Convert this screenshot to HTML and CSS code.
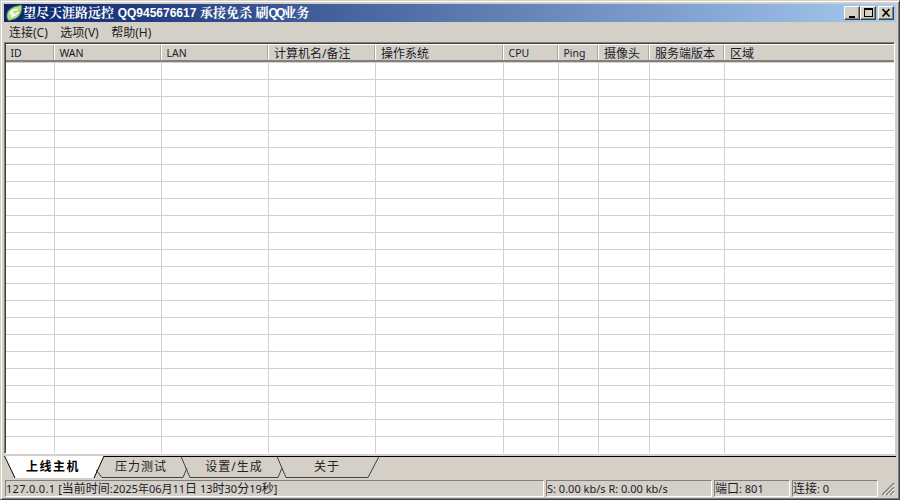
FILE: index.html
```html
<!DOCTYPE html>
<html lang="zh">
<head>
<meta charset="utf-8">
<title>望尽天涯路远控</title>
<link rel="stylesheet" href="styles.css">
</head>
<body>
<div class="window">
  <div class="titlebar">
    <svg class="app-icon" width="17" height="16" viewBox="0 0 17 16">
      <path d="M1 11C1 6 5 2.500 10 1.500C12 1 14 0.500 15.500 0.500C16 5 14.500 10 11 12.500C8 14.500 5 14.500 3 15.500C2 15 1 13 1 11Z" fill="#b4dc86" stroke="#6fa64a"/>
      <path d="M4 9C4.500 6 8 4.500 11.500 4.500M5 11.500C8 11.500 10 9.500 12.500 7M4 9C6 7 8 7.500 7.500 9.500C7 10.500 5.500 10 6 9" fill="none" stroke="#fff" stroke-width="1.300"/>
    </svg>
    <span class="title-text">望尽天涯路远控 <span class="lat">QQ945676617</span> 承接免杀 刷<span class="lat tight">QQ</span>业务</span>
    <div class="caption-buttons">
      <button class="cap-btn"><svg width="12" height="10" viewBox="0 0 12 10"><rect x="3" y="8" width="6" height="2" fill="#000"/></svg></button>
      <button class="cap-btn"><svg width="12" height="10" viewBox="0 0 12 10"><path d="M2 0H11V9H2ZM3 2V8H10V2Z" fill="#000" fill-rule="evenodd"/></svg></button>
      <button class="cap-btn close"><svg width="12" height="10" viewBox="0 0 12 10"><path d="M2.500 1L9.500 8.500M9.500 1L2.500 8.500" stroke="#000" stroke-width="1.700" fill="none"/></svg></button>
    </div>
  </div>
  <div class="menubar">
    <span class="menu-item">连接(C)</span>
    <span class="menu-item">选项(V)</span>
    <span class="menu-item">帮助(H)</span>
  </div>
  <div class="list">
    <div class="list-head">
      <span class="col c1">ID</span>
      <span class="col c2">WAN</span>
      <span class="col c3">LAN</span>
      <span class="col c4 cjk">计算机名/备注</span>
      <span class="col c5 cjk">操作系统</span>
      <span class="col c6">CPU</span>
      <span class="col c7">Ping</span>
      <span class="col c8 cjk">摄像头</span>
      <span class="col c9 cjk">服务端版本</span>
      <span class="col c10 cjk">区域</span>
    </div>
    <div class="list-body"></div>
  </div>
  <div class="tabs">
    <svg class="tab-art" width="892" height="24" viewBox="0 0 892 24">
      <path d="M0 1H100L90 23H11Z" fill="#fff"/>
      <path d="M100 1.500H892" stroke="#000" fill="none"/>
      <path d="M0.500 1L11 23M100 1L90 23" stroke="#000" fill="none"/>
      <path d="M92 15L98 22.500H179L183 13M177 1.500L186 22.500H274L278 13M273 1.500L282 22.500H364L375 1.500" stroke="#404040" fill="none"/>
    </svg>
    <span class="tab active">上线主机</span>
    <span class="tab t2">压力测试</span>
    <span class="tab t3">设置/生成</span>
    <span class="tab t4">关于</span>
  </div>
  <div class="statusbar">
    <span class="panel p1"><span class="ip">127.0.0.1</span> [<span class="zh">当前时间</span>:2025年06月11<span class="zh">日</span> 13<span class="zh">时</span>30<span class="zh">分</span>19<span class="zh">秒</span>]</span>
    <span class="panel p2">S: 0.00 kb/s R: 0.00 kb/s</span>
    <span class="panel p3"><span class="zh">端口</span>: 801</span>
    <span class="panel p4"><span class="zh">连接</span>: 0</span>
    <svg class="grip" width="14" height="14" viewBox="0 0 14 14">
      <path d="M13 1L1 13M13 5L5 13M13 9L9 13" stroke="#808080" stroke-width="1.500"/>
      <path d="M13 3L3 13M13 7L7 13M13 11L11 13" stroke="#fff"/>
    </svg>
  </div>
</div>
</body>
</html>
```

FILE: styles.css
```css
* { box-sizing: border-box; }
html, body { margin: 0; padding: 0; }
body {
  width: 900px;
  height: 500px;
  overflow: hidden;
  font-family: "Noto Sans", "Noto Sans CJK SC", sans-serif;
  font-size: 11px;
  color: #000;
}
.window {
  width: 900px;
  height: 500px;
  display: flex;
  flex-direction: column;
  background: #d4d0c8;
  padding: 3px;
  border-style: solid;
  border-width: 1px;
  border-color: #d4d0c8 #404040 #404040 #d4d0c8;
  box-shadow: inset 1px 1px 0 #fff, inset -1px -1px 0 #808080;
}
.titlebar {
  height: 18px;
  flex: none;
  display: flex;
  align-items: center;
  padding: 0 2px;
  background: linear-gradient(90deg, #0a246a, #a6caf0);
  color: #fff;
}
.app-icon { flex: none; }
.title-text {
  flex: 1;
  font-family: "Liberation Sans", "Noto Serif CJK SC", serif;
  font-weight: 700;
  font-size: 13px;
  line-height: 18px;
  white-space: nowrap;
}
.lat { font-size: 12px; }
.lat.tight { letter-spacing: -2px; }
.caption-buttons { display: flex; flex: none; }
.cap-btn {
  width: 16px;
  height: 14px;
  padding: 0;
  display: flex;
  align-items: center;
  justify-content: center;
  background: #d4d0c8;
  border: 1px solid;
  border-color: #fff #404040 #404040 #fff;
  box-shadow: inset -1px -1px 0 #808080;
}
.cap-btn.close { margin-left: 2px; }
.menubar {
  height: 19px;
  flex: none;
  display: flex;
  align-items: center;
  padding-left: 5px;
  gap: 12.5px;
  font-size: 12px;
  margin-top: 1px;
}
.menu-item { line-height: 18px; color: #222; }
.list {
  flex: none;
  height: 412px;
  margin-right: 1px;
  border: 1px solid;
  border-color: #808080 #fff #fff #808080;
  box-shadow: inset 1px 1px 0 #404040;
  background: #fff;
  padding: 1px 0 0 1px;
  display: flex;
  flex-direction: column;
}
.list-head {
  height: 18px;
  flex: none;
  display: flex;
  background: #d4d0c8;
  border-bottom: 2px solid #808080;
  border-top: 1px solid #fff;
}
.col {
  flex: none;
  padding-left: 4.500px;
  line-height: 16px;
  color: #1a1a2a;
  font-size: 10.500px;
  white-space: nowrap;
  border-right: 1px solid #fff;
  box-shadow: inset -1px 0 0 #aca899;
}
.col.cjk { font-size: 12px; padding-left: 5px; line-height: 17px; }
.c1 { width: 49px; }
.c2 { width: 107px; }
.c3 { width: 107px; }
.c4 { width: 107px; }
.c5 { width: 128px; }
.c6 { width: 55px; }
.c7 { width: 40px; }
.c8 { width: 51px; }
.c9 { width: 75px; }
.col.c10 { flex: 1; box-shadow: none; border-right: 0; }
.list-body {
  flex: 1;
  background-color: #fff;
  background-image:
    linear-gradient(#d4d0c8 1px, transparent 1px),
    linear-gradient(90deg,
      transparent 48px, #d4d0c8 48px, #d4d0c8 49px,
      transparent 49px, transparent 155px, #d4d0c8 155px, #d4d0c8 156px,
      transparent 156px, transparent 262px, #d4d0c8 262px, #d4d0c8 263px,
      transparent 263px, transparent 369px, #d4d0c8 369px, #d4d0c8 370px,
      transparent 370px, transparent 497px, #d4d0c8 497px, #d4d0c8 498px,
      transparent 498px, transparent 552px, #d4d0c8 552px, #d4d0c8 553px,
      transparent 553px, transparent 592px, #d4d0c8 592px, #d4d0c8 593px,
      transparent 593px, transparent 643px, #d4d0c8 643px, #d4d0c8 644px,
      transparent 644px, transparent 718px, #d4d0c8 718px, #d4d0c8 719px,
      transparent 719px);
  background-size: 100% 17px, 100% 100%;
  background-position: 0 17px, 0 0;
}
.tabs {
  position: relative;
  height: 24px;
  flex: none;
  display: flex;
  margin-top: 1px;
  font-size: 12px;
  line-height: 23px;
  letter-spacing: 1px;
}
.tab-art { position: absolute; left: 0; top: 0; }
.tab { position: relative; text-align: center; color: #222; }
.tab.active { width: 98px; font-weight: 700; letter-spacing: 1.500px; color: #000; }
.t2 { width: 78px; }
.t3 { width: 108px; }
.t4 { width: 78px; }
.statusbar {
  height: 17px;
  flex: none;
  display: flex;
  gap: 2px;
  align-items: stretch;
  position: relative;
  padding-left: 1px;
  margin-top: 1px;
  font-size: 11px;
}
.panel {
  border: 1px solid;
  border-color: #808080 #fff #fff #808080;
  line-height: 15px;
  color: #1a1a2a;
  white-space: nowrap;
}
.ip { letter-spacing: 0.300px; }
.zh { font-size: 12px; }
.p1 { width: 539px; }
.p2 { width: 166px; }
.p3 { width: 76px; }
.p4 { width: 86px; }
.grip { position: absolute; right: 1px; bottom: 1px; }
```
